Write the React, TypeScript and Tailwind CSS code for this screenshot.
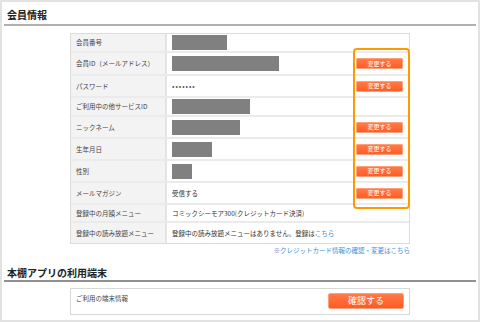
import React from "react";

type Row = {
  label: string;
  h: number;
  box?: number;
  value?: React.ReactNode;
  change?: boolean;
};

const rows: Row[] = [
  { label: "会員番号", h: 19, box: 55 },
  { label: "会員ID（メールアドレス）", h: 23, box: 107, change: true },
  { label: "パスワード", h: 22, value: <span className="tracking-[1px] text-[7px] leading-none text-[#555]">•••••••</span>, change: true },
  { label: "ご利用中の他サービスID", h: 19, box: 78 },
  { label: "ニックネーム", h: 22, box: 68, change: true },
  { label: "生年月日", h: 22, box: 40, change: true },
  { label: "性別", h: 22, box: 20, change: true },
  { label: "メールマガジン", h: 22, value: "受信する", change: true },
  { label: "登録中の月額メニュー", h: 18, value: "コミックシーモア300(クレジットカード決済)" },
  {
    label: "登録中の読み放題メニュー",
    h: 20,
    value: (
      <span>
        登録中の読み放題メニューはありません。登録は<span className="text-[#3a8fd6]">こちら</span>
      </span>
    ),
  },
];

function ChangeButton() {
  return (
    <div className="w-[47px] h-[11px] rounded-[1px] border border-[#ffa07a] bg-gradient-to-b from-[#ff7a45] to-[#ff5c24] flex items-center justify-center text-white text-[6px] leading-none">
      変更する
    </div>
  );
}

export default function App() {
  return (
    <div
      className="w-[480px] h-[322px] border-2 border-[#e2e2e2] bg-white text-[#444] overflow-hidden"
      style={{ fontFamily: '"Noto Sans CJK JP", "Noto Sans", sans-serif' }}
    >
      <h2 className="pl-[5px] pt-[6px] h-[22px] text-[10px] font-bold text-[#222] leading-[14px]">会員情報</h2>
      <div className="mx-[2px] h-[2px] bg-[#b0b0b0]" />

      <div className="relative ml-[68px] mt-[7px] w-[340px]">
        <div className="border border-[#dcdcdc]">
          {rows.map((r, i) => (
            <div
              key={i}
              className={`flex ${i < rows.length - 1 ? "border-b-2 border-[#ebebeb]" : ""}`}
              style={{ height: r.h }}
            >
              <div className="w-[96px] shrink-0 bg-[#f3f3f3] border-r-2 border-[#e4e4e4] pl-[5px] flex items-center text-[6.5px] leading-none">
                {r.label}
              </div>
              <div className="flex-1 flex items-center justify-between pl-[5px] pr-[6px] text-[6.5px] leading-none text-[#333]">
                <div className="flex items-center">
                  {r.box ? <div className="h-[15px] bg-[#808080]" style={{ width: r.box }} /> : r.value}
                </div>
                {r.change && <ChangeButton />}
              </div>
            </div>
          ))}
        </div>
        <div className="absolute left-[283px] top-[15px] w-[57px] h-[161px] border-2 border-[#ff9900] rounded-[4px]" />
        <div className="text-right text-[6.5px] leading-none text-[#3a8fd6] mt-[3px]">
          ※クレジットカード情報の確認・変更はこちら
        </div>
      </div>

      <h2 className="pl-[5px] mt-[12px] h-[13px] text-[10px] font-bold text-[#222] leading-[13px]">本棚アプリの利用端末</h2>
      <div className="mx-[2px] mt-[1px] h-[2px] bg-[#909090]" />

      <div className="ml-[68px] mt-[6px] w-[340px] h-[27px] border border-[#d8d8d8] flex items-start justify-between pl-[5px] pr-[5px]">
        <div className="text-[6.5px] leading-none mt-[6px]">ご利用の端末情報</div>
        <div className="mt-[4px] w-[76px] h-[16px] rounded-[2px] border border-[#ffa07a] bg-gradient-to-b from-[#ff7a45] to-[#ff5a22] flex items-center justify-center text-white text-[9px] leading-none">
          確認する
        </div>
      </div>
    </div>
  );
}
